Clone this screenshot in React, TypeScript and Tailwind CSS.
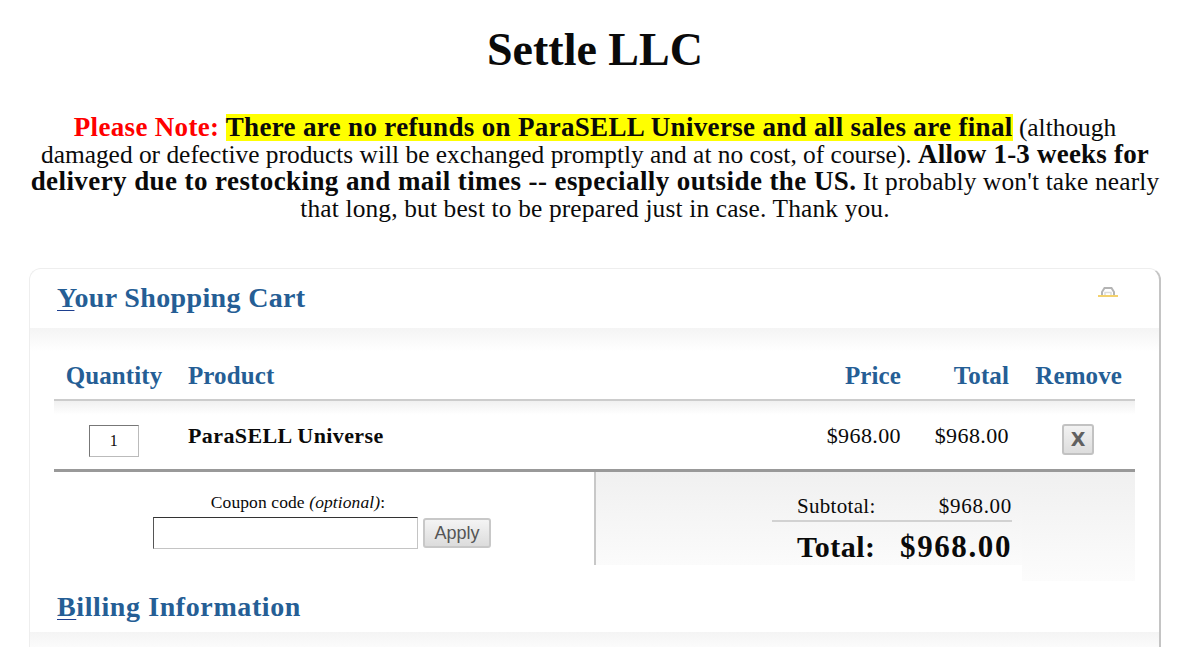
export default function App() {
  return (
    <div className="h-[647px] w-[1200px] overflow-hidden bg-white font-['Liberation_Serif',serif] text-[#0a0a0a]">
      <h1 className="w-[1190px] pt-[24px] text-center text-[46px] font-bold leading-[52px]">Settle LLC</h1>
      <p className="mt-[38px] w-[1190px] text-center text-[25.4px] leading-[27px]">
        <b className="text-[27px] tracking-[0.33px] text-[#ff0000]">Please Note:</b> <b className="bg-[linear-gradient(transparent_2px,#ffff00_2px,#ffff00_29px,transparent_29px)] text-[27px] tracking-[0.33px]">There are no refunds on ParaSELL Universe and all sales are final</b> (although<br />
        damaged or defective products will be exchanged promptly and at no cost, of course). <b className="text-[27px] tracking-[0.2px]">Allow 1-3 weeks for</b><br />
        <b className="text-[27px] tracking-[0.42px]">delivery due to restocking and mail times -- especially outside the US.</b> <span className="tracking-[0.15px]">It probably won't take nearly</span><br />
        <span className="tracking-[0.15px]">that long, but best to be prepared just in case. Thank you.</span>
      </p>
      <div className="ml-[29px] mt-[46px] h-[400px] w-[1132px] rounded-t-[12px] border-t border-r-2 border-l border-t-[#eeeeee] border-r-[#c4c4c4] border-l-[#eeeeee]">
        <div className="flex h-[59px] items-center justify-between pr-[40px] pb-[2px] pl-[27px]">
          <h2 className="text-[28px] font-bold tracking-[0.35px] text-[#255e95]"><span className="underline decoration-[#1d3f8f] decoration-1 underline-offset-3">Y</span>our Shopping Cart</h2>
          <svg width="22" height="11" viewBox="0 0 22 11" className="mb-[12px]">
            <path d="M5 9V6l2.5-4h7L17 6v3" fill="none" stroke="#b4b4b4" strokeWidth="2" />
            <path d="M8 9V6.5h6V9" fill="none" stroke="#dcdcdc" strokeWidth="1.5" />
            <path d="M1 10h20" stroke="#efc23d" strokeWidth="1.5" />
          </svg>
        </div>
        <div className="h-[23px] bg-gradient-to-b from-[#f4f4f4] to-white" />
        <div className="mx-[24px]">
          <div className="flex h-[48px] items-center pt-[2px] text-[25px] font-bold tracking-[0.1px] text-[#255e95]">
            <div className="w-[120px] text-center">Quantity</div>
            <div className="ml-[14px] flex-1">Product</div>
            <div className="w-[100px] text-right">Price</div>
            <div className="w-[108px] text-right">Total</div>
            <div className="w-[126px] pr-[13px] text-right">Remove</div>
          </div>
          <div className="h-[2px] bg-[#cccccc]" />
          <div className="flex h-[68px] items-center bg-gradient-to-b from-[#f0f0f0] from-0% via-white via-20% to-white pt-[1px] text-[22px] tracking-[0.4px]">
            <div className="flex w-[120px] justify-center">
              <div className="mt-[10px] flex h-[32px] w-[50px] items-center justify-center border border-[#bbbbbb] border-t-[#777777] border-l-[#777777] text-[16px]">1</div>
            </div>
            <div className="ml-[14px] flex-1 font-bold">ParaSELL Universe</div>
            <div className="w-[100px] text-right">$968.00</div>
            <div className="w-[108px] text-right">$968.00</div>
            <div className="flex w-[126px] justify-end pr-[41px]">
              <div className="mt-[8px] flex h-[31px] w-[32px] items-center justify-center rounded-[3px] border-2 border-[#c2c2c2] bg-gradient-to-b from-[#f2f2f2] to-[#dddddd] font-['DejaVu_Sans',sans-serif] text-[19px] font-bold tracking-normal text-[#606060]">X</div>
            </div>
          </div>
          <div className="h-[3px] bg-[#999999]" />
          <div className="flex">
            <div className="flex h-[93px] w-[540px] flex-col items-center pt-[19px] pr-[4px]">
              <div className="mr-[48px] text-[17.5px] leading-[22px] tracking-[0.1px]">Coupon code <i>(optional)</i>:</div>
              <div className="mt-[4px] flex items-center gap-[5px]">
                <div className="h-[32px] w-[265px] border border-[#c4c4c4] border-t-[#333333] border-l-[#555555]" />
                <div className="flex h-[30px] w-[68px] items-center justify-center rounded-[3px] border-2 border-[#c8c8c8] bg-gradient-to-b from-[#f4f4f4] to-[#dcdcdc] font-['Liberation_Sans',sans-serif] text-[18px] text-[#555555]">Apply</div>
              </div>
            </div>
            <div className="flex w-[541px] items-start">
              <div className="h-[93px] w-[428px] border-l-2 border-[#c8c8c8] bg-gradient-to-b from-[#f0f0f0] to-[#fbfbfb]">
                <div className="ml-[176px] w-[240px]">
                  <div className="flex h-[50px] items-end justify-between border-b-2 border-[#d2d2d2] pb-[2px] pl-[25px] text-[21px] leading-[24px]">
                    <span className="tracking-[0.3px]">Subtotal:</span><span className="tracking-[0.7px]">$968.00</span>
                  </div>
                  <div className="flex h-[41px] items-center justify-between pt-[8px] pl-[25px] text-[30px] font-bold leading-[34px]">
                    <span className="tracking-[0.5px]">Total:</span><span className="text-[31px] tracking-[1.6px]">$968.00</span>
                  </div>
                </div>
              </div>
              <div className="h-[109px] w-[113px] bg-gradient-to-b from-[#f0f0f0] to-[#fcfcfc]" />
            </div>
          </div>
        </div>
        <div className="mt-[1px] flex h-[50px] items-center pl-[27px]">
          <h2 className="text-[28px] font-bold tracking-[0.6px] text-[#255e95]"><span className="underline decoration-[#1d3f8f] decoration-1 underline-offset-3">B</span>illing Information</h2>
        </div>
        <div className="h-[23px] bg-gradient-to-b from-[#f4f4f4] to-white" />
      </div>
    </div>
  );
}
